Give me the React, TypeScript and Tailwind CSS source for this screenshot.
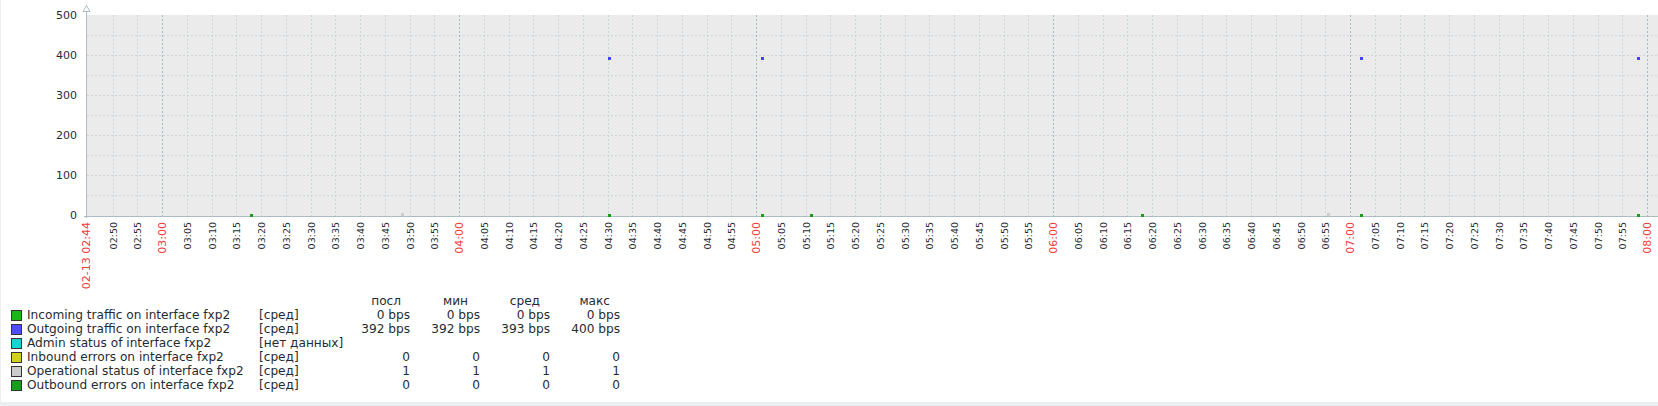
const PLOT_LEFT = 87;
const PLOT_RIGHT = 1658;
const PLOT_TOP = 15;
const PLOT_BOTTOM = 216;

const yLabels = [
  { text: "500", y: 15 },
  { text: "400", y: 55 },
  { text: "300", y: 95 },
  { text: "200", y: 135 },
  { text: "100", y: 175 },
  { text: "0", y: 215 },
];

// every 5 minutes from 02:50 to 08:00
const buildTicks = () => {
  const ticks: { label: string; x: number; hour: boolean }[] = [];
  for (let i = -2; i <= 60; i++) {
    const minutes = 180 + i * 5;
    const h = Math.floor(minutes / 60);
    const m = minutes % 60;
    ticks.push({
      label: `0${h}:${m < 10 ? "0" : ""}${m}`,
      x: Math.round(162 + i * 24.75),
      hour: m === 0,
    });
  }
  return ticks;
};

const points = [
  { x: 608, y: 57, color: "#4444ff" },
  { x: 761, y: 57, color: "#4444ff" },
  { x: 1360, y: 57, color: "#4444ff" },
  { x: 1637, y: 57, color: "#4444ff" },
  { x: 250, y: 214, color: "#1a9c1a" },
  { x: 608, y: 214, color: "#1a9c1a" },
  { x: 761, y: 214, color: "#1a9c1a" },
  { x: 810, y: 214, color: "#1a9c1a" },
  { x: 1141, y: 214, color: "#1a9c1a" },
  { x: 1360, y: 214, color: "#1a9c1a" },
  { x: 1637, y: 214, color: "#1a9c1a" },
  { x: 401, y: 213, color: "#cccccc" },
  { x: 1327, y: 213, color: "#cccccc" },
];

const legend = [
  { color: "#1ab51a", name: "Incoming traffic on interface fxp2", fn: "[сред]", values: ["0 bps", "0 bps", "0 bps", "0 bps"] },
  { color: "#4d4dff", name: "Outgoing traffic on interface fxp2", fn: "[сред]", values: ["392 bps", "392 bps", "393 bps", "400 bps"] },
  { color: "#1ad1d1", name: "Admin status of interface fxp2", fn: "[нет данных]", values: ["", "", "", ""] },
  { color: "#d1d11a", name: "Inbound errors on interface fxp2", fn: "[сред]", values: ["0", "0", "0", "0"] },
  { color: "#cccccc", name: "Operational status of interface fxp2", fn: "[сред]", values: ["1", "1", "1", "1"] },
  { color: "#1a9c1a", name: "Outbound errors on interface fxp2", fn: "[сред]", values: ["0", "0", "0", "0"] },
];

const Chart = () => {
  const ticks = buildTicks();
  return (
    <svg className="block shrink-0" width={1657} height={294} viewBox="1 0 1657 294">
      <rect x={PLOT_LEFT} y={PLOT_TOP} width={PLOT_RIGHT - PLOT_LEFT} height={PLOT_BOTTOM - PLOT_TOP} fill="#ebebeb" />

      {[35, 55, 75, 95, 115, 135, 155, 175, 195].map((y) => (
        <line key={y} x1={PLOT_LEFT} x2={PLOT_RIGHT} y1={y + 0.5} y2={y + 0.5} stroke="#ced6da" strokeDasharray="2 2" />
      ))}
      {ticks.map((t) => (
        <line
          key={t.label}
          x1={t.x + 0.5}
          x2={t.x + 0.5}
          y1={PLOT_TOP}
          y2={PLOT_BOTTOM}
          stroke={t.hour ? "#a9b8c0" : "#c9d6dc"}
          strokeDasharray="2 2"
        />
      ))}

      <line x1={86.5} x2={86.5} y1={11} y2={218} stroke="#acbbc2" />
      <line x1={84} x2={PLOT_RIGHT} y1={216.5} y2={216.5} stroke="#acbbc2" />
      <path d="M86.5 5.5 L83 11.5 H90 Z" fill="#fff" stroke="#acbbc2" />

      {points.map((p) => (
        <rect key={`${p.x}-${p.y}`} x={p.x} y={p.y} width={3} height={3} fill={p.color} />
      ))}

      <g className="font-['DejaVu_Sans',sans-serif]" fill="#1f2c33">
        {yLabels.map((l) => (
          <text key={l.text} x={77} y={l.y + 4} fontSize={11} textAnchor="end">
            {l.text}
          </text>
        ))}
        {ticks.map((t) => (
          <text
            key={t.label}
            x={t.x + (t.hour ? 4 : 3.5)}
            y={222}
            fontSize={t.hour ? 11 : 9.5}
            textAnchor="end"
            fill={t.hour ? "#f23a3a" : "#1f2c33"}
            transform={`rotate(-90 ${t.x + (t.hour ? 4 : 3.5)} 222)`}
          >
            {t.label}
          </text>
        ))}
        <text x={90} y={222} fontSize={11} textAnchor="end" fill="#f23a3a" transform="rotate(-90 90 222)">
          02-13 02:44
        </text>
      </g>
    </svg>
  );
};

const Legend = () => (
  <div className="ml-[10px] grid grid-cols-[248px_81px_70px_70px_70px_70px] font-['DejaVu_Sans',sans-serif] text-[12.15px] leading-[14px] text-[#1f2c33]">
    <div className="col-span-2" />
    <div className="pr-[9px] text-right">посл</div>
    <div className="pr-[12px] text-right">мин</div>
    <div className="pr-[10px] text-right">сред</div>
    <div className="pr-[10px] text-right">макс</div>
    {legend.map((row) => (
      <div key={row.name} className="col-span-6 grid grid-cols-subgrid">
        <div className="flex items-center gap-[5px]">
          <span className="h-[11px] w-[11px] border border-[#333333]" style={{ backgroundColor: row.color }} />
          <span>{row.name}</span>
        </div>
        <div className="whitespace-nowrap">{row.fn}</div>
        {row.values.map((value, i) => (
          <div key={i} className="text-right">
            {value}
          </div>
        ))}
      </div>
    ))}
  </div>
);

export default function App() {
  return (
    <div className="h-[406px] w-[1658px] overflow-hidden bg-[#ebeef2] pb-[4px] pl-[1px]">
      <div className="flex h-full flex-col bg-white">
        <Chart />
        <Legend />
      </div>
    </div>
  );
}
